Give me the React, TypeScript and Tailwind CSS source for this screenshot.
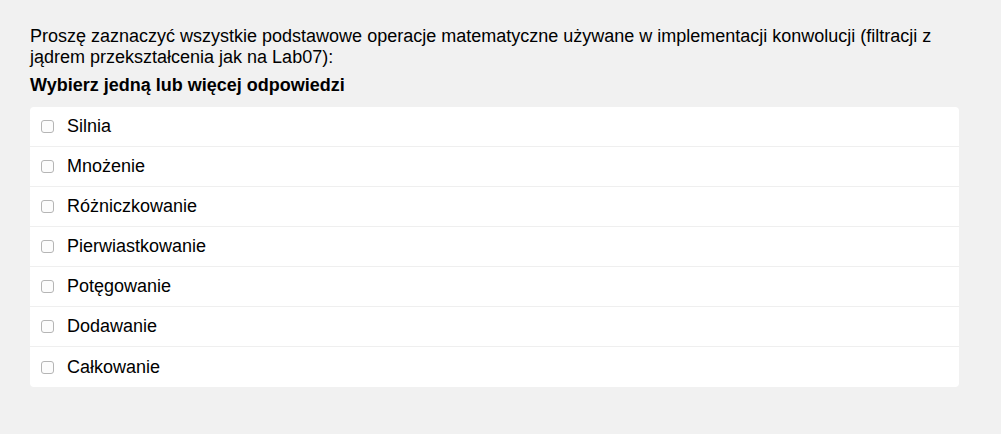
import React from 'react';

const OPTIONS = [
  'Silnia',
  'Mnożenie',
  'Różniczkowanie',
  'Pierwiastkowanie',
  'Potęgowanie',
  'Dodawanie',
  'Całkowanie',
];

function OptionRow({ label, last }: { label: string; last: boolean }) {
  return (
    <label
      className={`flex items-center h-10 pl-[11px] cursor-pointer ${
        last ? '' : 'border-b border-[#efefef]'
      }`}
    >
      <span className="w-[13px] h-[13px] rounded-[3px] border border-[#b5b5b5] bg-[#fcfcfc] shrink-0" />
      <span className="ml-[13px] text-[18px] leading-[21px] text-black">{label}</span>
    </label>
  );
}

export default function App() {
  return (
    <div
      className="min-h-screen h-[434px] bg-[#f1f1f1] pt-[26px] pl-[30px]"
      style={{ fontFamily: '"Liberation Sans", Arial, sans-serif' }}
    >
      <div className="w-[929px]">
        <p className="text-[18px] leading-[21px] text-black">
          Proszę zaznaczyć wszystkie podstawowe operacje matematyczne używane w implementacji konwolucji (filtracji z jądrem przekształcenia jak na Lab07):
        </p>
        <p className="mt-[7px] text-[18px] leading-[21px] font-bold text-black">
          Wybierz jedną lub więcej odpowiedzi
        </p>
        <div className="mt-[11px] bg-white rounded-[4px]">
          {OPTIONS.map((o, i) => (
            <OptionRow key={o} label={o} last={i === OPTIONS.length - 1} />
          ))}
        </div>
      </div>
    </div>
  );
}
